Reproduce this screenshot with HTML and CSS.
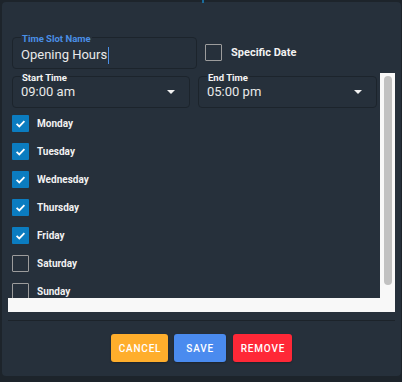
FILE: index.html
```html
<!DOCTYPE html>
<html lang="en">
<head>
  <meta charset="UTF-8">
  <meta name="viewport" content="width=device-width, initial-scale=1.0">
  <title>Time Slot</title>
  <link rel="stylesheet" href="styles.css">
</head>
<body>
  <div class="marker"></div>
  <div class="dialog">
    <div class="top-row">
      <div class="field field-name">
        <span class="field-label focused">Time Slot Name</span>
        <div class="value">Opening Hours<span class="cursor"></span></div>
      </div>
      <label class="check specific">
        <span class="box"></span>
        <span class="check-text">Specific Date</span>
      </label>
    </div>

    <div class="scroller">
      <div class="pane">
        <div class="time-row">
          <div class="field field-select">
            <span class="field-label">Start Time</span>
            <div class="value">09:00 am<span class="arrow"></span></div>
          </div>
          <div class="field field-select">
            <span class="field-label">End Time</span>
            <div class="value">05:00 pm<span class="arrow"></span></div>
          </div>
        </div>

        <ul class="days">
          <li class="check day"><span class="box checked"><svg viewBox="0 0 17 17"><path d="M4.6 8.8 L7.3 11.4 L12.4 6.1"/></svg></span><span class="check-text">Monday</span></li>
          <li class="check day"><span class="box checked"><svg viewBox="0 0 17 17"><path d="M4.6 8.8 L7.3 11.4 L12.4 6.1"/></svg></span><span class="check-text">Tuesday</span></li>
          <li class="check day"><span class="box checked"><svg viewBox="0 0 17 17"><path d="M4.6 8.8 L7.3 11.4 L12.4 6.1"/></svg></span><span class="check-text">Wednesday</span></li>
          <li class="check day"><span class="box checked"><svg viewBox="0 0 17 17"><path d="M4.6 8.8 L7.3 11.4 L12.4 6.1"/></svg></span><span class="check-text">Thursday</span></li>
          <li class="check day"><span class="box checked"><svg viewBox="0 0 17 17"><path d="M4.6 8.8 L7.3 11.4 L12.4 6.1"/></svg></span><span class="check-text">Friday</span></li>
          <li class="check day"><span class="box"></span><span class="check-text">Saturday</span></li>
          <li class="check day"><span class="box"></span><span class="check-text">Sunday</span></li>
        </ul>
      </div>
      <div class="vtrack"><div class="thumb"></div></div>
      <div class="htrack"></div>
    </div>

    <div class="actions">
      <button class="btn btn-cancel">Cancel</button>
      <button class="btn btn-save">Save</button>
      <button class="btn btn-remove">Remove</button>
    </div>
  </div>
</body>
</html>
```

FILE: styles.css
```css
* {
  box-sizing: border-box;
  margin: 0;
  padding: 0;
  font-family: Roboto, 'Liberation Sans', sans-serif;
}

body {
  background: #1d242b;
  color: #f2f2f2;
  width: 402px;
  height: 382px;
  overflow: hidden;
}

.marker {
  position: absolute;
  top: 0;
  left: 202px;
  width: 2px;
  height: 3px;
  background: #1b6c9c;
}

.dialog {
  margin: 2px 1px 0 2px;
  height: 374px;
  padding: 35px 6px 14px;
  background: #26303b;
  border-radius: 4px;
}

/* outlined fields */
.field {
  position: relative;
  height: 32px;
  border: 1px solid #1c242c;
  border-radius: 4px;
  padding: 0 9px 0 8px;
}

.field-label {
  position: absolute;
  top: -4px;
  left: 8px;
  padding: 0 1px;
  background: #26303b;
  font-size: 9.5px;
  font-weight: 700;
  line-height: 10px;
  color: #f4f4f4;
}

.field-label.focused {
  color: #4a8fe6;
}

.field .value {
  font-size: 13px;
  line-height: 30px;
  color: #e9e9e9;
  display: flex;
  align-items: center;
}

.top-row {
  display: flex;
  align-items: center;
  padding-left: 4px;
}

.field-name {
  width: 185px;
}

.field-name .value {
  padding-top: 2px;
}

.cursor {
  display: inline-block;
  width: 1px;
  height: 17px;
  margin-left: 1px;
  background: #4a8fe6;
}

/* checkboxes */
.check {
  display: flex;
  align-items: center;
  gap: 8px;
}

.box {
  width: 17px;
  height: 17px;
  border: 1.5px solid #9c9c9c;
  border-radius: 1px;
  flex-shrink: 0;
}

.box.checked {
  border: none;
  background: #0b7cc0;
}

.box svg {
  display: block;
  width: 17px;
  height: 17px;
  fill: none;
  stroke: #ffffff;
  stroke-width: 1.8;
}

.check-text {
  font-size: 10px;
  font-weight: 700;
  color: #f2f2f2;
}

.specific {
  margin-left: 8px;
  margin-top: -1px;
  gap: 9px;
}

.specific .check-text {
  font-size: 11px;
}

/* scroll area with its tracks */
.scroller {
  margin-top: 4px;
  display: grid;
  grid-template-columns: 1fr 15px;
  grid-template-rows: 225px 14px;
  background: #f8f8f8;
}

.pane {
  padding: 3px 0 0 4px;
  background: #26303b;
  overflow: hidden;
}

.vtrack {
  padding: 3px 3px 0 4px;
}

.thumb {
  height: 209px;
  border-radius: 4px;
  background: #c1c1c1;
}

.htrack {
  grid-column: 1 / 3;
}

.time-row {
  display: flex;
  gap: 8px;
}

.field-select {
  width: 178px;
}

.field-select + .field-select {
  width: 179px;
}

.field-select .value {
  justify-content: space-between;
  padding-right: 5px;
}

.arrow {
  width: 0;
  height: 0;
  border-left: 4px solid transparent;
  border-right: 4px solid transparent;
  border-top: 4px solid #f2f2f2;
}

.days {
  list-style: none;
  margin-top: 1px;
}

.day {
  height: 28px;
}

/* footer */
.actions {
  margin-top: 8px;
  border-top: 1px solid #1c232a;
  padding-top: 13px;
  display: flex;
  justify-content: center;
  gap: 6px;
}

.btn {
  height: 28px;
  padding: 0 7px 0 7.8px;
  border: none;
  border-radius: 3px;
  color: #ffffff;
  font-size: 10px;
  font-weight: 500;
  letter-spacing: 0.8px;
  text-transform: uppercase;
  box-shadow: 0 1px 2px rgba(0, 0, 0, 0.25);
}

.btn-cancel {
  background: #ffae2c;
}

.btn-save {
  background: #4a8bef;
  padding: 0 12px;
}

.btn-remove {
  background: #ff2837;
  margin-left: 1px;
}
```
